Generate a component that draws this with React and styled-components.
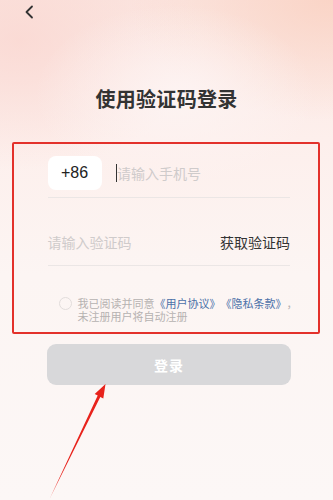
import React, { useState } from 'react';
import styled, { createGlobalStyle } from 'styled-components';

const GlobalStyle = createGlobalStyle`
  html, body { margin: 0; padding: 0; }
  body { width: 333px; height: 500px; overflow: hidden; }
`;

const Page = styled.div`
  position: relative;
  width: 333px;
  height: 500px;
  overflow: hidden;
  font-family: "Noto Sans CJK SC", "Noto Sans", sans-serif;
  color: #333;
  background:
    radial-gradient(ellipse 140px 90px at 175px 95px, rgba(253, 244, 243, 0.9), rgba(253, 244, 243, 0) 100%),
    radial-gradient(ellipse 200px 120px at 330px 0px, rgba(250, 208, 192, 0.8), rgba(250, 208, 192, 0) 100%),
    radial-gradient(ellipse 180px 130px at 20px 40px, rgba(250, 214, 208, 0.75), rgba(250, 214, 208, 0) 100%),
    linear-gradient(180deg, #fbe6e1 0%, #fdefec 28%, #fcf5f3 55%, #fcf7f6 100%);
`;

const TopBar = styled.div`
  height: 24px;
  display: flex;
  align-items: center;
  padding-left: 24px;
`;

const BackButton = styled.button`
  border: none;
  background: none;
  padding: 0;
  width: 14px;
  height: 18px;
  display: flex;
  align-items: center;
  cursor: pointer;
`;

const Title = styled.h1`
  margin: 61px 0 0;
  text-align: center;
  font-size: 20px;
  line-height: 28px;
  font-weight: 700;
  color: #333;
  letter-spacing: 0.3px;
`;

const FormFrame = styled.div`
  margin: 29px 13px 0 12px;
  border: 2.5px solid #e3312b;
  border-radius: 2px;
  padding: 12px 28px 9px 33.5px;
`;

const Row = styled.div`
  display: flex;
  align-items: center;
  border-bottom: 1px solid #ebe6e5;
`;

const PhoneRow = styled(Row)`
  padding-bottom: 7px;
`;

const CodeRow = styled(Row)`
  padding: 34px 0 13px;
  justify-content: space-between;
`;

const AreaCode = styled.div`
  width: 54px;
  height: 34px;
  border-radius: 8px;
  background: #fff;
  display: flex;
  align-items: center;
  justify-content: center;
  font-family: "Liberation Sans", Arial, sans-serif;
  font-size: 16px;
  color: #222;
`;

const Field = styled.div`
  display: flex;
  align-items: center;
  margin-left: ${p => p.$indent || 0}px;
  font-size: 14px;
  line-height: 20px;
  color: #cfcbcb;
`;

const Caret = styled.span`
  width: 1.6px;
  height: 18px;
  background: #333;
`;

const SendCode = styled.button`
  border: none;
  background: none;
  padding: 0;
  font-family: inherit;
  font-size: 14px;
  line-height: 20px;
  color: #333;
  cursor: pointer;
`;

const Agreement = styled.div`
  display: flex;
  align-items: flex-start;
  margin: 31px 0 0 11px;
  font-size: 11px;
  line-height: 13px;
  color: #b6b2b1;
`;

const AgreementLine = styled.div`
  display: flex;
  height: 13px;
  white-space: nowrap;
`;

const Check = styled.span`
  flex: none;
  width: 11px;
  height: 11px;
  border: 1px solid #e2dddc;
  border-radius: 50%;
  margin: 0 6px 0 0;
  background: ${p => (p.$on ? '#e3312b' : 'transparent')};
  cursor: pointer;
`;

const Link = styled.span`
  color: #4b70a8;
`;

const LoginButton = styled.button`
  display: block;
  margin: 10px 0 0 47px;
  width: 244px;
  height: 41px;
  border: none;
  border-radius: 9px;
  background: #d8d8da;
  color: #fff;
  font-family: inherit;
  font-size: 14px;
  font-weight: 700;
  letter-spacing: 1px;
`;

const ArrowLayer = styled.svg`
  position: absolute;
  left: 0;
  top: 0;
  pointer-events: none;
`;

export default function App() {
  const [agreed, setAgreed] = useState(false);
  return (
    <Page>
      <GlobalStyle />
      <TopBar>
        <BackButton aria-label="back">
          <svg width="10" height="14" viewBox="0 0 10 14">
            <path d="M8 1.5 L2.5 7 L8 12.5" fill="none" stroke="#333" strokeWidth="1.8" strokeLinecap="round" strokeLinejoin="round" />
          </svg>
        </BackButton>
      </TopBar>

      <Title>使用验证码登录</Title>

      <FormFrame>
        <PhoneRow>
          <AreaCode>+86</AreaCode>
          <Field $indent={14}>
            <Caret />
            请输入手机号
          </Field>
        </PhoneRow>
        <CodeRow>
          <Field>请输入验证码</Field>
          <SendCode>获取验证码</SendCode>
        </CodeRow>
        <Agreement>
          <Check $on={agreed} onClick={() => setAgreed(!agreed)} />
          <div>
            <AgreementLine>
              <span>我已阅读并同意</span>
              <Link>《用户协议》</Link>
              <Link>《隐私条款》</Link>
              <span>，</span>
            </AgreementLine>
            <AgreementLine>未注册用户将自动注册</AgreementLine>
          </div>
        </Agreement>
      </FormFrame>

      <LoginButton>登录</LoginButton>

      <ArrowLayer width="333" height="500" viewBox="0 0 333 500">
        <polygon
          points="50,498 100.3,396.9 103.3,398.4 105.5,384 94.7,394.1 97.7,395.6"
          fill="#e8231c"
        />
      </ArrowLayer>
    </Page>
  );
}
